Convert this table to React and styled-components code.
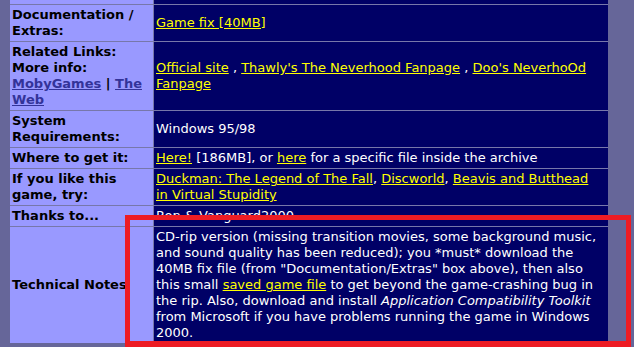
import React from "react";
import styled, { createGlobalStyle } from "styled-components";

const GlobalStyle = createGlobalStyle`
  html, body {
    margin: 0;
    padding: 0;
    background: #666699;
    overflow: hidden;
  }
  body {
    font-family: Verdana, "DejaVu Sans", sans-serif;
    font-size: 13px;
  }
`;

const Page = styled.div`
  position: relative;
  height: 347px;
  overflow: hidden;
  padding-left: 10px;
`;

const Table = styled.div`
  display: grid;
  grid-template-columns: 143px 454px;
  gap: 1px;
  width: 598px;
  background: #7777aa;
  margin-top: -16px;
`;

const LabelCell = styled.div`
  background: #9999ff;
  color: #000;
  font-weight: bold;
  padding: 2px;
  display: flex;
  align-items: center;
`;

const ValueCell = styled.div`
  background: #000066;
  color: #fff;
  padding: 2px;
  display: flex;
  align-items: center;
`;

const Text = styled.div`
  line-height: 16px;
  white-space: nowrap;
`;

const LabelLink = styled.a`
  color: #333399;
  text-decoration: underline;
`;

const Link = styled.a`
  color: #ffff00;
  text-decoration: underline;
`;

const Highlight = styled.div`
  position: absolute;
  left: 125px;
  top: 215px;
  width: 506px;
  height: 132px;
  box-sizing: border-box;
  border: 5px solid #ed1c24;
  border-bottom-width: 6px;
  pointer-events: none;
`;

const rows = [
  {
    label: (
      <>
        <LabelLink href="#">Shots</LabelLink>(2)
      </>
    ),
    value: null,
  },
  {
    label: (
      <>
        Documentation /<br />
        Extras:
      </>
    ),
    value: <Link href="#">Game fix [40MB]</Link>,
  },
  {
    label: (
      <>
        Related Links:
        <br />
        More info:
        <br />
        <LabelLink href="#">MobyGames</LabelLink> | <LabelLink href="#">The</LabelLink>
        <br />
        <LabelLink href="#">Web</LabelLink>
      </>
    ),
    value: (
      <>
        <Link href="#">Official site</Link> , <Link href="#">Thawly's The Neverhood Fanpage</Link> ,{" "}
        <Link href="#">Doo's NeverhoOd</Link>
        <br />
        <Link href="#">Fanpage</Link>
      </>
    ),
  },
  {
    label: (
      <>
        System
        <br />
        Requirements:
      </>
    ),
    value: <>Windows 95/98</>,
  },
  {
    label: <>Where to get it:</>,
    value: (
      <>
        <Link href="#">Here!</Link> [186MB], or <Link href="#">here</Link> for a specific file inside the archive
      </>
    ),
  },
  {
    label: (
      <>
        If you like this
        <br />
        game, try:
      </>
    ),
    value: (
      <>
        <Link href="#">Duckman: The Legend of The Fall</Link>, <Link href="#">Discworld</Link>,{" "}
        <Link href="#">Beavis and Butthead</Link>
        <br />
        <Link href="#">in Virtual Stupidity</Link>
      </>
    ),
  },
  {
    label: <>Thanks to...</>,
    value: <>Ron &amp; Vanguard2000</>,
  },
  {
    label: <>Technical Notes</>,
    value: (
      <>
        CD-rip version (missing transition movies, some background music,
        <br />
        and sound quality has been reduced); you *must* download the
        <br />
        40MB fix file (from "Documentation/Extras" box above), then also
        <br />
        this small <Link href="#">saved game file</Link> to get beyond the game-crashing bug in
        <br />
        the rip. Also, download and install <i>Application Compatibility Toolkit</i>
        <br />
        from Microsoft if you have problems running the game in Windows
        <br />
        2000.
      </>
    ),
  },
];

export default function App() {
  return (
    <>
      <GlobalStyle />
      <Page>
        <Table>
          {rows.map((row, i) => (
            <React.Fragment key={i}>
              <LabelCell>
                <Text>{row.label}</Text>
              </LabelCell>
              <ValueCell>
                <Text>{row.value}</Text>
              </ValueCell>
            </React.Fragment>
          ))}
        </Table>
        <Highlight />
      </Page>
    </>
  );
}
